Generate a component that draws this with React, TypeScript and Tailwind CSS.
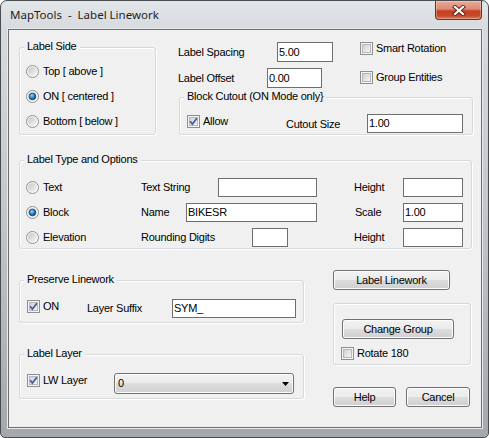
import React from "react";

const F = "font-['Liberation_Sans',Arial,sans-serif]";

function Radio({ checked }: { checked?: boolean }) {
  return (
    <svg width="13" height="13" viewBox="0 0 13 13" className="shrink-0 block">
      <defs>
        <linearGradient id="rOuter" x1="0" y1="0" x2="1" y2="1">
          <stop offset="0" stopColor="#f2f2f2" />
          <stop offset="1" stopColor="#ffffff" />
        </linearGradient>
        <linearGradient id="rInner" x1="0" y1="0" x2="1" y2="1">
          <stop offset="0" stopColor="#c4c6c8" />
          <stop offset="1" stopColor="#f7f7f7" />
        </linearGradient>
        <radialGradient id="rDot" cx="0.4" cy="0.35" r="0.7">
          <stop offset="0" stopColor="#9edcf8" />
          <stop offset="0.5" stopColor="#2a86cc" />
          <stop offset="1" stopColor="#0c3c74" />
        </radialGradient>
      </defs>
      <circle cx="6.5" cy="6.5" r="6" fill="url(#rOuter)" stroke="#8e8f8f" />
      <circle cx="6.5" cy="6.5" r="4.5" fill="url(#rInner)" />
      {checked && (
        <circle cx="6.5" cy="6.5" r="3.3" fill="url(#rDot)" stroke="#1a3f6a" strokeWidth="0.8" />
      )}
    </svg>
  );
}

function Check({ checked }: { checked?: boolean }) {
  return (
    <svg width="13" height="13" viewBox="0 0 13 13" className="shrink-0 block">
      <defs>
        <linearGradient id="cbg" x1="0" y1="0" x2="1" y2="1">
          <stop offset="0" stopColor="#cbcfd5" />
          <stop offset="1" stopColor="#f7f7f7" />
        </linearGradient>
      </defs>
      <rect x="0.5" y="0.5" width="12" height="12" fill="#f4f4f4" stroke="#8e8f8f" />
      <rect x="2.5" y="2.5" width="8" height="8" fill="url(#cbg)" stroke="#b4b8bd" />
      {checked && (
        <path d="M3.2 6.3 L5.4 9 L9.9 3.3" fill="none" stroke="#4a5f97" strokeWidth="1.8" />
      )}
    </svg>
  );
}

function CheckLabel({
  checked,
  label,
  className = "",
}: {
  checked?: boolean;
  label: string;
  className?: string;
}) {
  return (
    <div className={`flex items-center gap-[3px] h-[13px] ${className}`}>
      <Check checked={checked} />
      <span className="leading-[13px] whitespace-nowrap">{label}</span>
    </div>
  );
}

function RadioLabel({
  checked,
  label,
  className = "",
}: {
  checked?: boolean;
  label: string;
  className?: string;
}) {
  return (
    <div className={`flex items-center gap-[4px] h-[13px] ${className}`}>
      <Radio checked={checked} />
      <span className="leading-[13px] whitespace-nowrap">{label}</span>
    </div>
  );
}

function Group({
  title,
  className,
  children,
}: {
  title?: string;
  className: string;
  children?: React.ReactNode;
}) {
  return (
    <div
      className={`relative rounded-[3px] border border-[#d5d9dc] shadow-[inset_1px_1px_0_#ffffff,1px_1px_0_#ffffff] ${className}`}
    >
      {title && (
        <span className="absolute left-[4px] top-[-8px] px-[3px] bg-[#f0f0f0] leading-[13px] whitespace-nowrap">
          {title}
        </span>
      )}
      {children}
    </div>
  );
}

function Input({ value = "", className }: { value?: string; className: string }) {
  return (
    <div
      className={`shrink-0 border border-[#6e6e6e] bg-white pl-[1px] flex items-center leading-[13px] ${className}`}
    >
      {value}
    </div>
  );
}

function Button({ children, className }: { children: React.ReactNode; className: string }) {
  return (
    <div
      className={`h-[20px] shrink-0 flex items-center justify-center rounded-[3px] border border-[#707070] bg-[linear-gradient(to_bottom,#f2f2f2_0%,#ebebeb_50%,#dddddd_50%,#cfcfcf_100%)] shadow-[inset_0_0_0_1px_#fcfcfc] leading-[13px] ${className}`}
    >
      {children}
    </div>
  );
}

function Combo() {
  return (
    <div className="w-[180px] h-[21px] shrink-0 rounded-[3px] border border-[#707070] bg-[linear-gradient(to_bottom,#f2f2f2_0%,#ebebeb_50%,#dddddd_50%,#cfcfcf_100%)] shadow-[inset_0_0_0_1px_#fcfcfc] flex items-center justify-between pl-[3px] pr-[4px]">
      <span className="leading-[13px]">0</span>
      <svg width="7" height="4" viewBox="0 0 7 4" className="block">
        <path d="M0 0 H7 L3.5 4 Z" fill="#000000" />
      </svg>
    </div>
  );
}

function CloseButton() {
  return (
    <div className="mr-[6px] w-[47px] h-[19px] rounded-b-[4px] border border-t-0 border-[#7b2a1c] bg-[linear-gradient(to_bottom,#eaaa9a_0%,#dc8a75_45%,#c6401f_55%,#c94729_80%,#df7758_100%)] shadow-[inset_0_0_0_1px_rgba(255,255,255,0.3)] flex items-center justify-center">
      <svg width="14" height="11" viewBox="0 0 14 11" className="block">
        <path d="M3 2 L11 9 M11 2 L3 9" stroke="#5b2218" strokeWidth="4" strokeLinecap="square" />
        <path d="M3 2 L11 9 M11 2 L3 9" stroke="#ffffff" strokeWidth="2.2" strokeLinecap="square" />
      </svg>
    </div>
  );
}

export default function App() {
  return (
    <div className={`w-[489px] h-[438px] bg-white ${F} text-[11px] tracking-[-0.25px] text-black`}>
      <div className="w-[489px] h-[438px] flex flex-col rounded-t-[7px] rounded-b-[5px] border border-[#4a4d50] bg-[linear-gradient(to_bottom,#e3e6e9_0px,#d6dade_28px,#c4c8cc_200px,#a4a8ac_100%)] overflow-hidden">
        <div className="h-[27px] flex justify-between shrink-0">
          <div className="pl-[9px] pt-[6px] text-[11.5px] leading-[16px] tracking-normal text-[#1e1e1e] font-['Noto_Sans',sans-serif] whitespace-pre">
            MapTools  -  Label Linework
          </div>
          <CloseButton />
        </div>
        <div className="ml-[6px] border border-[#e8eaec] w-[476px] h-[401px]">
          <div className="border border-[#6c6f72] w-[474px] h-[399px] bg-[#f0f0f0]">
            <div className="flex flex-col pl-[10px]">
              {/* top section */}
              <div className="flex items-start">
                <Group title="Label Side" className="mt-[17px] w-[137px] h-[88px] shrink-0">
                  <div className="flex flex-col pt-[17px] pl-[6px] gap-[12px]">
                    <RadioLabel label="Top [ above ]" />
                    <RadioLabel checked label="ON [ centered ]" />
                    <RadioLabel label="Bottom [ below ]" />
                  </div>
                </Group>
                <div className="ml-[22px] flex flex-col w-[295px]">
                  <div className="flex h-[58px]">
                    <div className="flex flex-col w-[182px]">
                      <div className="mt-[12px] h-[20px] flex items-center">
                        <span className="w-[99px]">Label Spacing</span>
                        <Input value="5.00" className="w-[56px] h-[20px]" />
                      </div>
                      <div className="mt-[6px] h-[20px] flex items-center">
                        <span className="w-[89px]">Label Offset</span>
                        <Input value="0.00" className="w-[55px] h-[20px]" />
                      </div>
                    </div>
                    <div className="flex flex-col mt-[12px] gap-[16px]">
                      <CheckLabel label="Smart Rotation" />
                      <CheckLabel label="Group Entities" />
                    </div>
                  </div>
                  <Group title="Block Cutout (ON Mode only}" className="mt-[9px] ml-[1px] w-[294px] h-[38px]">
                    <div className="flex items-start pt-[16px] pl-[7px]">
                      <CheckLabel checked label="Allow" className="w-[99px] mt-[1px]" />
                      <span className="w-[81px] h-[19px] flex items-center mt-[1px]">Cutout Size</span>
                      <Input value="1.00" className="w-[96px] h-[19px]" />
                    </div>
                  </Group>
                </div>
              </div>

              {/* label type */}
              <Group title="Label Type and Options" className="mt-[25px] w-[453px] h-[89px]">
                <div className="flex flex-col pt-[14px] pl-[6px]">
                  <div className="h-[25px] flex items-center">
                    <RadioLabel label="Text" className="w-[115px]" />
                    <span className="w-[77px]">Text String</span>
                    <Input className="w-[99px] h-[19px]" />
                    <span className="ml-[37px] w-[49px]">Height</span>
                    <Input className="w-[60px] h-[19px]" />
                  </div>
                  <div className="h-[25px] flex items-center">
                    <RadioLabel checked label="Block" className="w-[115px]" />
                    <span className="w-[45px]">Name</span>
                    <Input value="BIKESR" className="w-[131px] h-[19px]" />
                    <span className="ml-[38px] w-[48px]">Scale</span>
                    <Input value="1.00" className="w-[60px] h-[19px]" />
                  </div>
                  <div className="h-[25px] flex items-center">
                    <RadioLabel label="Elevation" className="w-[115px]" />
                    <span className="w-[111px]">Rounding Digits</span>
                    <Input className="w-[36px] h-[19px]" />
                    <span className="ml-[66px] w-[49px]">Height</span>
                    <Input className="w-[60px] h-[19px]" />
                  </div>
                </div>
              </Group>

              {/* bottom section */}
              <div className="flex mt-[21px]">
                <div className="flex flex-col w-[285px]">
                  <Group title="Preserve Linework" className="mt-[10px] h-[43px]">
                    <div className="flex items-start pt-[18px] pl-[7px]">
                      <CheckLabel checked label="ON" className="w-[60px] mt-[1px]" />
                      <span className="w-[85px] h-[19px] flex items-center">Layer Suffix</span>
                      <Input value="SYM_" className="w-[124px] h-[19px]" />
                    </div>
                  </Group>
                  <Group title="Label Layer" className="mt-[31px] h-[45px]">
                    <div className="flex items-start pt-[18px] pl-[7px]">
                      <CheckLabel checked label="LW Layer" className="w-[87px] mt-[1px]" />
                      <Combo />
                    </div>
                  </Group>
                </div>
                <div className="ml-[29px] flex flex-col w-[138px]">
                  <Button className="w-[117px]">Label Linework</Button>
                  <Group className="mt-[13px] h-[62px]">
                    <div className="flex flex-col items-start pt-[15px] pl-[8px]">
                      <Button className="w-[112px]">Change Group</Button>
                      <CheckLabel label="Rotate 180" className="mt-[8px] -ml-[1px]" />
                    </div>
                  </Group>
                  <div className="flex mt-[22px] gap-[10px]">
                    <Button className="w-[63px]">Help</Button>
                    <Button className="w-[64px]">Cancel</Button>
                  </div>
                </div>
              </div>
            </div>
          </div>
        </div>
      </div>
    </div>
  );
}
